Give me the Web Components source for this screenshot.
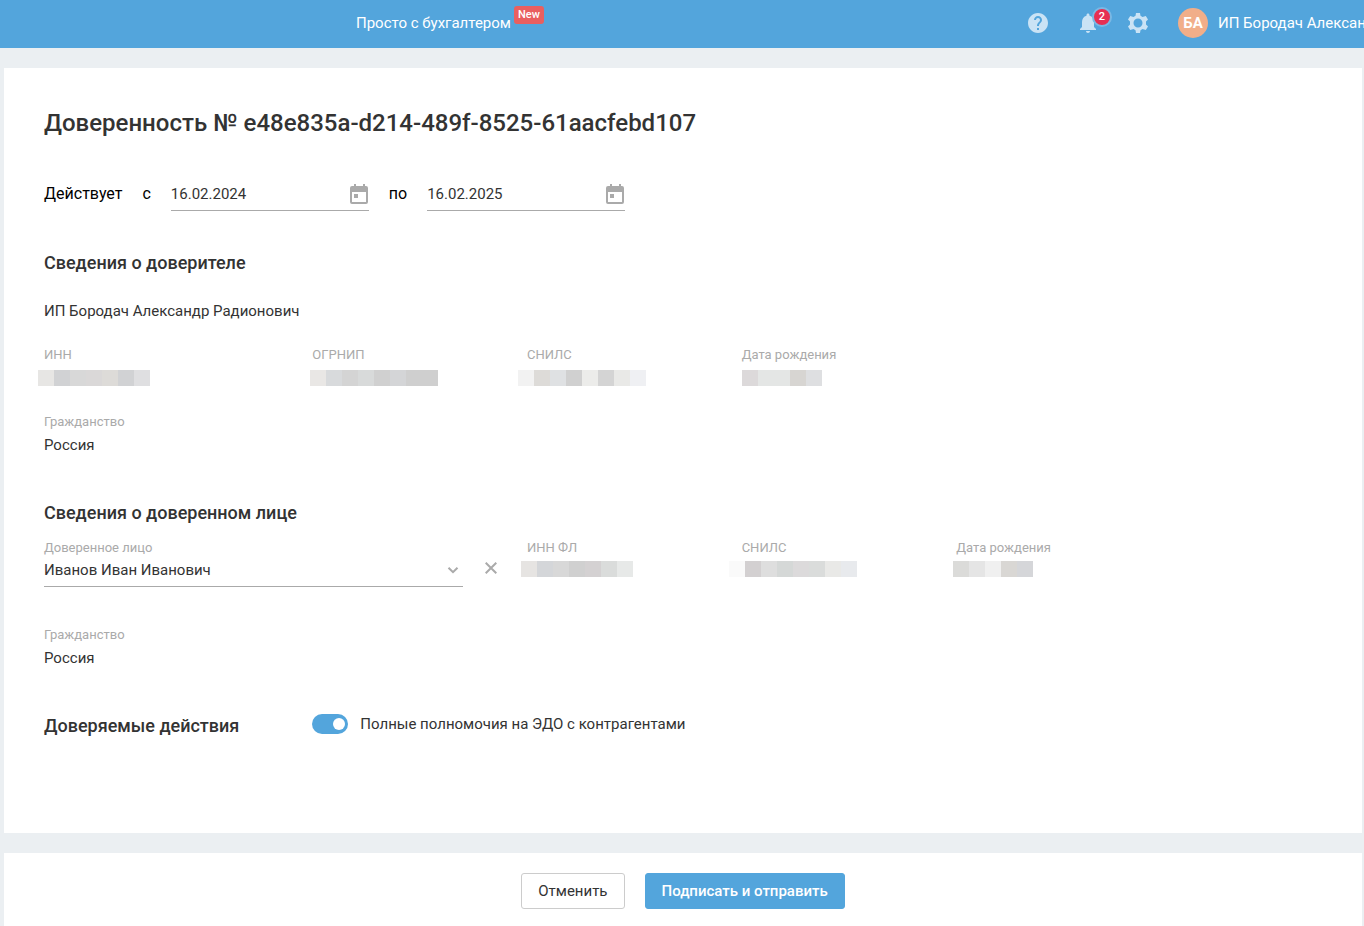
<!DOCTYPE html>
<html lang="ru">
<head>
<meta charset="utf-8">
<meta name="viewport" content="width=device-width, initial-scale=1">
<title>Доверенность</title>
<style>
  body {
    margin: 0;
    background-color: #ebeff2;
    color: #333;
    font: 15px/20px Roboto, "Liberation Sans", sans-serif;
  }
</style>
</head>
<body>
<attorney-page></attorney-page>

<script>
/**
 * Registers an element whose shadow root is cloned from the given markup
 * @param {string} name
 * @param {string} html
 * @param {function(ShadowRoot, HTMLElement): void} [render]
 */
function define(name, html, render) {
  const template = document.createElement("template");
  template.innerHTML = html;

  window.customElements.define(name, class extends HTMLElement {
    constructor() {
      super();
      this.attachShadow({ mode: "open" });
      this.shadowRoot.appendChild(template.content.cloneNode(true));
    }

    connectedCallback() {
      if (render) {
        render(this.shadowRoot, this);
      }
    }
  });
}

define("app-header", `
<style>
  :host {
    display: flex;
    align-items: flex-start;
    justify-content: space-between;
    height: 48px;
    padding-left: 356px;
    background-color: #53a5dc;
    color: #fff;
    overflow: hidden;
  }

  a {
    display: flex;
    gap: 3px;
    align-items: center;
    height: 46px;
    color: inherit;
    text-decoration: none;
    white-space: nowrap;
  }

  .new {
    align-self: flex-start;
    margin-top: 6px;
    padding: 0 4px;
    border-radius: 3px;
    background-color: #e95f5f;
    font-size: 11px;
    font-weight: 500;
    line-height: 18px;
  }

  .tools {
    display: flex;
    flex: 0 0 351px;
    align-items: center;
    min-width: 0;
    max-width: 351px;
    height: 46px;
  }

  button {
    position: relative;
    display: flex;
    flex: none;
    justify-content: center;
    width: 50px;
    padding: 0;
    border: none;
    background-color: transparent;
    color: #cae3f5;
    font: inherit;
    cursor: pointer;
  }

  svg {
    width: 24px;
    height: 24px;
    fill: currentColor;
  }

  .count {
    position: absolute;
    top: -4px;
    left: 29px;
    width: 16px;
    border: 2px solid #7ab8e4;
    border-radius: 50%;
    background-color: #e62e52;
    color: #fff;
    font-size: 11px;
    font-weight: 500;
    line-height: 16px;
  }

  .avatar {
    flex: none;
    width: 30px;
    margin: 0 10px 0 15px;
    border-radius: 50%;
    background-color: #f1ae89;
    font-weight: 700;
    line-height: 30px;
    text-align: center;
  }

  .user {
    white-space: nowrap;
  }
</style>
<a href="#">Просто с бухгалтером <span class="new">New</span></a>
<div class="tools">
  <button aria-label="Помощь">
    <svg viewBox="0 0 24 24"><path d="M12 2C6.48 2 2 6.48 2 12s4.48 10 10 10 10-4.48 10-10S17.52 2 12 2zm1 17h-2v-2h2v2zm2.07-7.75l-.9.92C13.45 12.9 13 13.5 13 15h-2v-.5c0-1.1.45-2.1 1.17-2.83l1.24-1.26c.37-.36.59-.86.59-1.41 0-1.1-.9-2-2-2s-2 .9-2 2H8c0-2.21 1.79-4 4-4s4 1.79 4 4c0 .88-.36 1.68-.93 2.25z"/></svg>
  </button>
  <button aria-label="Уведомления">
    <svg viewBox="0 0 24 24"><path d="M12 22c1.100 0 2-.9 2-2h-4c0 1.100.9 2 2 2zm6-6v-5c0-3.070-1.630-5.640-4.500-6.320V4c0-.83-.67-1.500-1.500-1.500s-1.500.67-1.500 1.500v.68C7.640 5.360 6 7.920 6 11v5l-2 2v1h16v-1l-2-2z"/></svg>
    <span class="count">2</span>
  </button>
  <button aria-label="Настройки">
    <svg viewBox="0 0 24 24"><path fill-rule="evenodd" d="M10 2h4l.5 2.800 2 1.100L19.800 5l2.200 3.600-2 2V13.400l2 2L19.800 19l-3.300-.9-2 1.100L14 22h-4l-.5-2.800-2-1.100-3.300.9-2.200-3.600 2-2v-2.800l-2-2L4.200 5l3.300.9 2-1.100zM12 7.500a4.500 4.500 0 1 0 0 9 4.500 4.500 0 0 0 0-9z"/></svg>
  </button>
  <span class="avatar">БА</span>
  <span class="user">ИП Бородач Александр</span>
</div>
`);

define("date-field", `
<style>
  :host {
    display: flex;
    gap: 20px;
    align-items: center;
  }

  label {
    color: #000;
    font-size: 16px;
  }

  .control {
    display: flex;
    align-items: center;
    width: 198px;
    height: 32px;
    padding-top: 2px;
    border-bottom: 1px solid #aaa;
  }

  input {
    flex: 1;
    min-width: 0;
    padding: 0;
    border: none;
    outline: none;
    background: none;
    color: inherit;
    font: inherit;
  }

  button {
    display: flex;
    padding: 0;
    border: none;
    background: none;
    cursor: pointer;
  }

  svg {
    width: 20px;
    height: 20px;
    fill: #aaa;
  }
</style>
<label for="date"></label>
<div class="control">
  <input id="date" type="text">
  <button aria-label="Выбрать дату">
    <svg viewBox="0 0 20 20"><path fill-rule="evenodd" d="M5 0h2v2h7V0h2v2h1a2 2 0 0 1 2 2v14a2 2 0 0 1-2 2H3a2 2 0 0 1-2-2V4a2 2 0 0 1 2-2h2zM3 8v10h14V8zM5 10h4v4H5z"/></svg>
  </button>
</div>
`, (root, host) => {
  root.querySelector("label").textContent = host.getAttribute("label");
  root.querySelector("input").value = host.getAttribute("value");
});

define("info-field", `
<style>
  :host {
    display: grid;
    gap: 4px;
    align-content: start;
  }

  .label {
    color: #aaa;
    font-size: 13px;
    line-height: 16px;
  }

  .value {
    line-height: 22px;
  }
</style>
<div class="label"></div>
<div class="value"><slot></slot></div>
`, (root, host) => {
  root.querySelector(".label").textContent = host.getAttribute("label");
});

// Hidden value: a strip of 16px cells, "start" is where the strip begins
define("masked-value", `
<style>
  :host {
    display: flex;
    align-items: center;
    height: 22px;
    margin-left: -16px;
  }

  svg {
    display: block;
    width: 160px;
    height: 16px;
  }
</style>
<svg viewBox="0 0 160 16" shape-rendering="crispEdges" aria-hidden="true"></svg>
`, (root, host) => {
  const start = Number(host.getAttribute("start"));

  root.querySelector("svg").innerHTML = host.getAttribute("cells").split(" ").map((color, i) => `
    <rect x="${start + i * 16}" width="16" height="16" fill="#${color}"/>
  `).join("");
});

define("person-select", `
<style>
  :host {
    display: block;
  }

  label {
    display: block;
    color: #aaa;
    font-size: 13px;
    line-height: 16px;
  }

  .control {
    display: grid;
    align-items: center;
    height: 30px;
    border-bottom: 1px solid #aaa;
  }

  select, svg {
    grid-area: 1 / 1;
  }

  select {
    appearance: none;
    width: 100%;
    padding: 0 24px 2px 0;
    border: none;
    outline: none;
    background: none;
    color: inherit;
    font: inherit;
  }

  svg {
    justify-self: end;
    width: 20px;
    height: 20px;
    fill: none;
    stroke: #aaa;
    stroke-width: 2;
    pointer-events: none;
  }
</style>
<label for="person">Доверенное лицо</label>
<div class="control">
  <select id="person"><option>Иванов Иван Иванович</option></select>
  <svg viewBox="0 0 20 20"><path d="M5.500 6.700l4.500 4.500 4.500-4.500"/></svg>
</div>
`);

define("clear-button", `
<style>
  :host {
    display: block;
  }

  button {
    display: flex;
    align-items: center;
    justify-content: center;
    width: 36px;
    height: 56px;
    padding: 0;
    border: none;
    background: none;
    cursor: pointer;
  }

  svg {
    width: 12px;
    height: 12px;
    stroke: #aaa;
    stroke-width: 2;
  }
</style>
<button aria-label="Очистить">
  <svg viewBox="0 0 12 12"><path d="M.7.700l10.600 10.600M11.300.7L.7 11.300"/></svg>
</button>
`);

define("toggle-switch", `
<style>
  :host {
    display: block;
  }

  label {
    display: flex;
    gap: 12px;
    align-items: center;
    cursor: pointer;
  }

  input {
    appearance: none;
    display: flex;
    flex: none;
    box-sizing: border-box;
    width: 36px;
    height: 20px;
    margin: 0;
    padding: 4px 3px;
    border-radius: 10px;
    background-color: #ccc;
  }

  input::before {
    content: "";
    width: 12px;
    height: 12px;
    border-radius: 50%;
    background-color: #fff;
  }

  input:checked {
    justify-content: flex-end;
    background-color: #53a5dc;
  }
</style>
<label><input type="checkbox" role="switch" checked><slot></slot></label>
`);

define("action-button", `
<style>
  :host {
    display: block;
  }

  button {
    box-sizing: border-box;
    height: 36px;
    padding: 0 16px;
    border: 1px solid #ccc;
    border-radius: 3px;
    background-color: #fff;
    color: inherit;
    font: inherit;
    cursor: pointer;
  }

  :host([primary]) button {
    border-color: #53a5dc;
    background-color: #53a5dc;
    color: #fff;
    font-weight: 500;
  }
</style>
<button><slot></slot></button>
`);

define("attorney-page", `
<style>
  :host {
    display: flex;
    flex-direction: column;
    gap: 20px;
    min-height: 100vh;
  }

  main, footer {
    margin: 0 2px 0 4px;
    background-color: #fff;
  }

  main {
    padding: 40px 40px 95px;
  }

  h1, h2, p {
    margin: 0;
    font-weight: 500;
  }

  h1 {
    font-size: 24px;
    line-height: 30px;
  }

  h2 {
    font-size: 18px;
    line-height: 24px;
  }

  p {
    margin: 26px 0;
    font-weight: 400;
  }

  .period {
    display: flex;
    gap: 20px;
    align-items: center;
    margin: 38px 0 40px;
    color: #000;
    font-size: 16px;
  }

  date-field {
    color: #333;
    font-size: 15px;
  }

  .row {
    display: grid;
    grid-template-columns: repeat(24, minmax(0, 1fr));
    column-gap: 10px;
  }

  .row > * {
    grid-column: span 4;
  }

  .row > .wide {
    grid-column: span 5;
  }

  .row > person-select {
    grid-column: span 8;
  }

  .row > clear-button {
    grid-column: span 1;
  }

  .row > toggle-switch {
    grid-column: span 19;
  }

  .citizenship {
    margin: 25px 0 45px;
  }

  .person {
    margin-top: 15px;
  }

  .person info-field {
    gap: 2px;
  }

  .person + .citizenship {
    margin-top: 31px;
  }

  footer {
    display: flex;
    flex: 1;
    gap: 20px;
    align-items: flex-start;
    justify-content: center;
    padding-top: 20px;
  }
</style>
<app-header></app-header>
<main>
  <h1>Доверенность № e48e835a-d214-489f-8525-61aacfebd107</h1>
  <div class="period">
    <span>Действует</span>
    <date-field label="с" value="16.02.2024"></date-field>
    <date-field label="по" value="16.02.2025"></date-field>
  </div>

  <h2>Сведения о доверителе</h2>
  <p>ИП Бородач Александр Радионович</p>
  <div class="row">
    <info-field class="wide" label="ИНН">
      <masked-value start="10" cells="e7e6e4 d1d2d4 d8d8d8 dad8d8 dddbd8 d1d2d4 dfdfe1"></masked-value>
    </info-field>
    <info-field label="ОГРНИП">
      <masked-value start="14" cells="e9e7e5 d8dadc d4d4d4 d8dada d0d0d0 d4d5d7 cfcfcf cfcfcf"></masked-value>
    </info-field>
    <info-field label="СНИЛС">
      <masked-value start="7" cells="f2f2f2 dddbd8 dfe1e3 d0d0d0 ececea d4d4d4 e9e9e7 eff0f3"></masked-value>
    </info-field>
    <info-field label="Дата рождения">
      <masked-value start="16" cells="dcd9da e4e6e5 e4e6e5 d7d5d2 dedfe1"></masked-value>
    </info-field>
  </div>
  <info-field class="citizenship" label="Гражданство">Россия</info-field>

  <h2>Сведения о доверенном лице</h2>
  <div class="row person">
    <person-select></person-select>
    <clear-button></clear-button>
    <info-field label="ИНН ФЛ">
      <masked-value start="10" cells="e6e4e2 d4d6d9 d8d8d8 d0d0d0 d4d1d2 dadcdb e7e9e8"></masked-value>
    </info-field>
    <info-field label="СНИЛС">
      <masked-value start="3" cells="fafafa d3d0d1 dedede d5d8d7 dcdadb dadcdb e9e9e7 e8eaed"></masked-value>
    </info-field>
    <info-field label="Дата рождения">
      <masked-value start="13" cells="dbdbd9 e5e5e5 f0f0f0 d9d7d4 d5d6d9"></masked-value>
    </info-field>
  </div>
  <info-field class="citizenship" label="Гражданство">Россия</info-field>

  <div class="row">
    <h2 class="wide">Доверяемые действия</h2>
    <toggle-switch>Полные полномочия на ЭДО с контрагентами</toggle-switch>
  </div>
</main>
<footer>
  <action-button>Отменить</action-button>
  <action-button primary>Подписать и отправить</action-button>
</footer>
`);
</script>
</body>
</html>
